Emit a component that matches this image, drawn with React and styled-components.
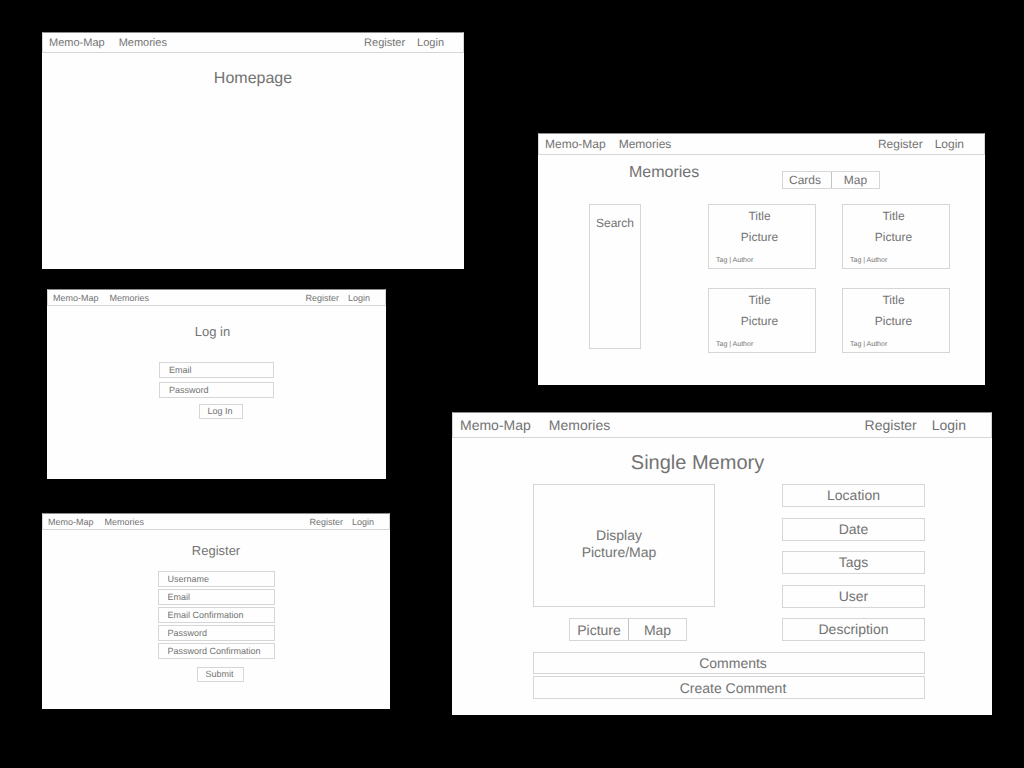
import React from "react";
import styled, { createGlobalStyle } from "styled-components";

const GlobalStyle = createGlobalStyle`
  *, *::before, *::after { box-sizing: border-box; }
  body {
    margin: 0;
    background: #000;
    color: #737373;
    font-family: "Liberation Sans", Arial, Helvetica, sans-serif;
    text-rendering: geometricPrecision;
  }
  button, input { font: inherit; color: inherit; text-rendering: inherit; }
  h1, h2, h3, p { margin: 0; font-weight: 400; }
`;

const line = "#d6d6d6";

/* Nav measurements for each frame scale. */
const scales = {
  small: { font: 9, nav: 17, left: 5, gap: 11, right: 15, linkGap: 9 },
  medium: { font: 11, nav: 21, left: 6, gap: 14, right: 19, linkGap: 12 },
  large: { font: 12, nav: 22, left: 6, gap: 13, right: 20, linkGap: 12 },
  xlarge: { font: 14, nav: 26, left: 7, gap: 18, right: 25, linkGap: 15 },
};

const Board = styled.main`
  display: grid;
  grid-template-columns: 410fr 12fr 528fr;
  align-items: start;
  min-height: 100vh;
  padding: 32px 32px 32px 42px;
`;

const LeftColumn = styled.div`
  grid-column: 1 / 3;
  grid-row: 1;
  display: flex;
  flex-direction: column;
`;

const RightColumn = styled.div`
  grid-column: 2 / 4;
  grid-row: 1;
  display: flex;
  flex-direction: column;
  padding-top: 101px;
  gap: 27px;
`;

const FrameBox = styled.section`
  display: flex;
  flex-direction: column;
  min-height: ${(p) => p.$height}px;
  margin: ${(p) => p.$margin || "0"};
  background: #fefefe;
  font-size: ${(p) => scales[p.$scale].font}px;
`;

const NavBar = styled.nav`
  display: flex;
  align-items: center;
  justify-content: space-between;
  height: ${(p) => scales[p.$scale].nav}px;
  padding: 0 ${(p) => scales[p.$scale].right}px 0 ${(p) => scales[p.$scale].left}px;
  border: 1px solid ${line};
  border-top-color: #8c8c8c;
`;

const NavGroup = styled.div`
  display: flex;
  gap: ${(p) => p.$gap}px;
`;

const NavLink = styled.a`
  color: inherit;
  text-decoration: none;
`;

const Title = styled.h1`
  padding-right: ${(p) => p.$shift || 0}px;
  font-size: ${(p) => p.$size}px;
  line-height: 20px;
  text-align: center;
`;

const PageBody = styled.div`
  display: flex;
  flex-direction: column;
  padding: ${(p) => p.$padding};
`;

const Form = styled.form`
  display: flex;
  flex-direction: column;
  align-self: center;
  width: ${(p) => p.$width}px;
  gap: ${(p) => p.$gap}px;
  margin-top: ${(p) => p.$top}px;
`;

const Field = styled.input`
  width: 100%;
  height: 16px;
  padding: 0 8px 0 9px;
  border: 1px solid ${line};
  background: transparent;
  outline: none;
  &::placeholder { color: inherit; opacity: 1; }
`;

const SubmitButton = styled.button`
  align-self: center;
  height: 15px;
  margin: ${(p) => p.$top}px 0 0 9px;
  padding: 0 9px 0 7px;
  border: 1px solid ${line};
  background: transparent;
  line-height: 13px;
`;

const Toggle = styled.div`
  display: flex;
  width: ${(p) => p.$width}px;
  height: ${(p) => p.$height}px;
  border: 1px solid ${line};
`;

const ToggleButton = styled.button`
  width: 50%;
  padding: 0;
  border: 0;
  background: transparent;
  text-align: center;
  &:first-child { padding-right: ${(p) => p.$inset || 0}px; }
  & + & { border-left: 1px solid #c4c4c4; }
`;

const MemoriesHead = styled.header`
  display: flex;
  justify-content: space-between;
  align-items: flex-start;
  padding: 0 70px 0 40px;
`;

const ToggleSlot = styled.div`
  padding-top: 8px;
`;

const MemoriesContent = styled.div`
  display: flex;
  gap: 67px;
  margin-top: 15px;
`;

const SearchPanel = styled.aside`
  width: 52px;
  height: 145px;
  padding-top: 10px;
  border: 1px solid ${line};
  text-align: center;
  line-height: 16px;
`;

const CardGrid = styled.div`
  flex: 1;
  display: grid;
  grid-template-columns: 1fr 1fr;
  align-content: start;
  gap: 19px 26px;
`;

const CardBox = styled.article`
  display: flex;
  flex-direction: column;
  height: 65px;
  padding: 3px 7px 2px;
  border: 1px solid ${line};
`;

const CardLine = styled.p`
  padding-right: 5px;
  font-size: 12px;
  line-height: 16px;
  text-align: center;
  & + & { margin-top: 5px; }
`;

const CardMeta = styled.p`
  margin-top: auto;
  font-size: 7px;
  line-height: 10px;
`;

const MemoryContent = styled.div`
  display: flex;
  gap: 67px;
  min-height: 157px;
  margin-top: 11px;
`;

const MediaColumn = styled.div`
  flex: 1;
  display: flex;
  flex-direction: column;
  justify-content: space-between;
`;

const Media = styled.div`
  display: flex;
  align-items: center;
  justify-content: center;
  height: 123px;
  padding: 0 10px 3px 0;
  border: 1px solid ${line};
  line-height: 17px;
  text-align: center;
`;

const MediaToggle = styled.div`
  align-self: center;
  padding-left: 8px;
`;

const Details = styled.ul`
  display: flex;
  flex-direction: column;
  justify-content: space-between;
  width: 143px;
  margin: 0;
  padding: 0;
  list-style: none;
`;

const Detail = styled.li`
  height: 23px;
  border: 1px solid ${line};
  line-height: 21px;
  text-align: center;
`;

const CommentArea = styled.div`
  display: flex;
  flex-direction: column;
  gap: 2px;
  margin-top: 11px;
`;

const CommentsPanel = styled.h2`
  height: 22px;
  padding-left: 8px;
  border: 1px solid ${line};
  font-size: 14px;
  line-height: 21px;
  text-align: center;
`;

const CreateButton = styled.button`
  height: 23px;
  padding: 0 0 0 8px;
  border: 1px solid ${line};
  background: transparent;
`;

function Frame({ name, scale, height, margin, children }) {
  const s = scales[scale];
  return (
    <FrameBox aria-label={name} $scale={scale} $height={height} $margin={margin}>
      <NavBar $scale={scale}>
        <NavGroup $gap={s.gap}>
          <NavLink href="#home">Memo-Map</NavLink>
          <NavLink href="#memories">Memories</NavLink>
        </NavGroup>
        <NavGroup $gap={s.linkGap}>
          <NavLink href="#register">Register</NavLink>
          <NavLink href="#login">Login</NavLink>
        </NavGroup>
      </NavBar>
      {children}
    </FrameBox>
  );
}

function TextField({ label, type = "text" }) {
  return <Field type={type} placeholder={label} aria-label={label} />;
}

function ViewToggle({ options, width, height, inset }) {
  return (
    <Toggle $width={width} $height={height}>
      {options.map((option) => (
        <ToggleButton type="button" key={option} $inset={inset}>{option}</ToggleButton>
      ))}
    </Toggle>
  );
}

function Card() {
  return (
    <CardBox>
      <CardLine>Title</CardLine>
      <CardLine>Picture</CardLine>
      <CardMeta>Tag | Author</CardMeta>
    </CardBox>
  );
}

const registerFields = [
  { label: "Username" },
  { label: "Email", type: "email" },
  { label: "Email Confirmation", type: "email" },
  { label: "Password", type: "password" },
  { label: "Password Confirmation", type: "password" },
];
const details = ["Location", "Date", "Tags", "User", "Description"];

export default function App() {
  return (
    <>
      <GlobalStyle />
      <Board>
        <LeftColumn>
          <Frame name="Homepage" scale="medium" height={237}>
            <PageBody $padding="16px 0 0">
              <Title $size={16}>Homepage</Title>
            </PageBody>
          </Frame>

          <Frame name="Log in" scale="small" height={190} margin="20px 78px 0 5px">
            <PageBody $padding="16px 0 0">
              <Title $size={13} $shift={8}>Log in</Title>
              <Form $width={115} $gap={4} $top={20}>
                <TextField label="Email" type="email" />
                <TextField label="Password" type="password" />
                <SubmitButton type="button" $top={2}>Log In</SubmitButton>
              </Form>
            </PageBody>
          </Frame>

          <Frame name="Register" scale="small" height={196} margin="34px 74px 0 0">
            <PageBody $padding="11px 0 0">
              <Title $size={13}>Register</Title>
              <Form $width={117} $gap={2} $top={10}>
                {registerFields.map((field) => (
                  <TextField key={field.label} {...field} />
                ))}
                <SubmitButton type="button" $top={6}>Submit</SubmitButton>
              </Form>
            </PageBody>
          </Frame>
        </LeftColumn>

        <RightColumn>
          <Frame name="Memories" scale="large" height={252} margin="0 7px 0 86px">
            <PageBody $padding="8px 35px 0 51px">
              <MemoriesHead>
                <Title $size={16}>Memories</Title>
                <ToggleSlot>
                  <ViewToggle options={["Cards", "Map"]} width={98} height={18} inset={4} />
                </ToggleSlot>
              </MemoriesHead>
              <MemoriesContent>
                <SearchPanel>Search</SearchPanel>
                <CardGrid>
                  <Card />
                  <Card />
                  <Card />
                  <Card />
                </CardGrid>
              </MemoriesContent>
            </PageBody>
          </Frame>

          <Frame name="Single Memory" scale="xlarge" height={303}>
            <PageBody $padding="15px 67px 0 81px">
              <Title $size={20} $shift={63}>Single Memory</Title>
              <MemoryContent>
                <MediaColumn>
                  <Media>Display<br />Picture/Map</Media>
                  <MediaToggle>
                    <ViewToggle options={["Picture", "Map"]} width={118} height={23} />
                  </MediaToggle>
                </MediaColumn>
                <Details>
                  {details.map((item) => (
                    <Detail key={item}>{item}</Detail>
                  ))}
                </Details>
              </MemoryContent>
              <CommentArea>
                <CommentsPanel>Comments</CommentsPanel>
                <CreateButton type="button">Create Comment</CreateButton>
              </CommentArea>
            </PageBody>
          </Frame>
        </RightColumn>
      </Board>
    </>
  );
}
